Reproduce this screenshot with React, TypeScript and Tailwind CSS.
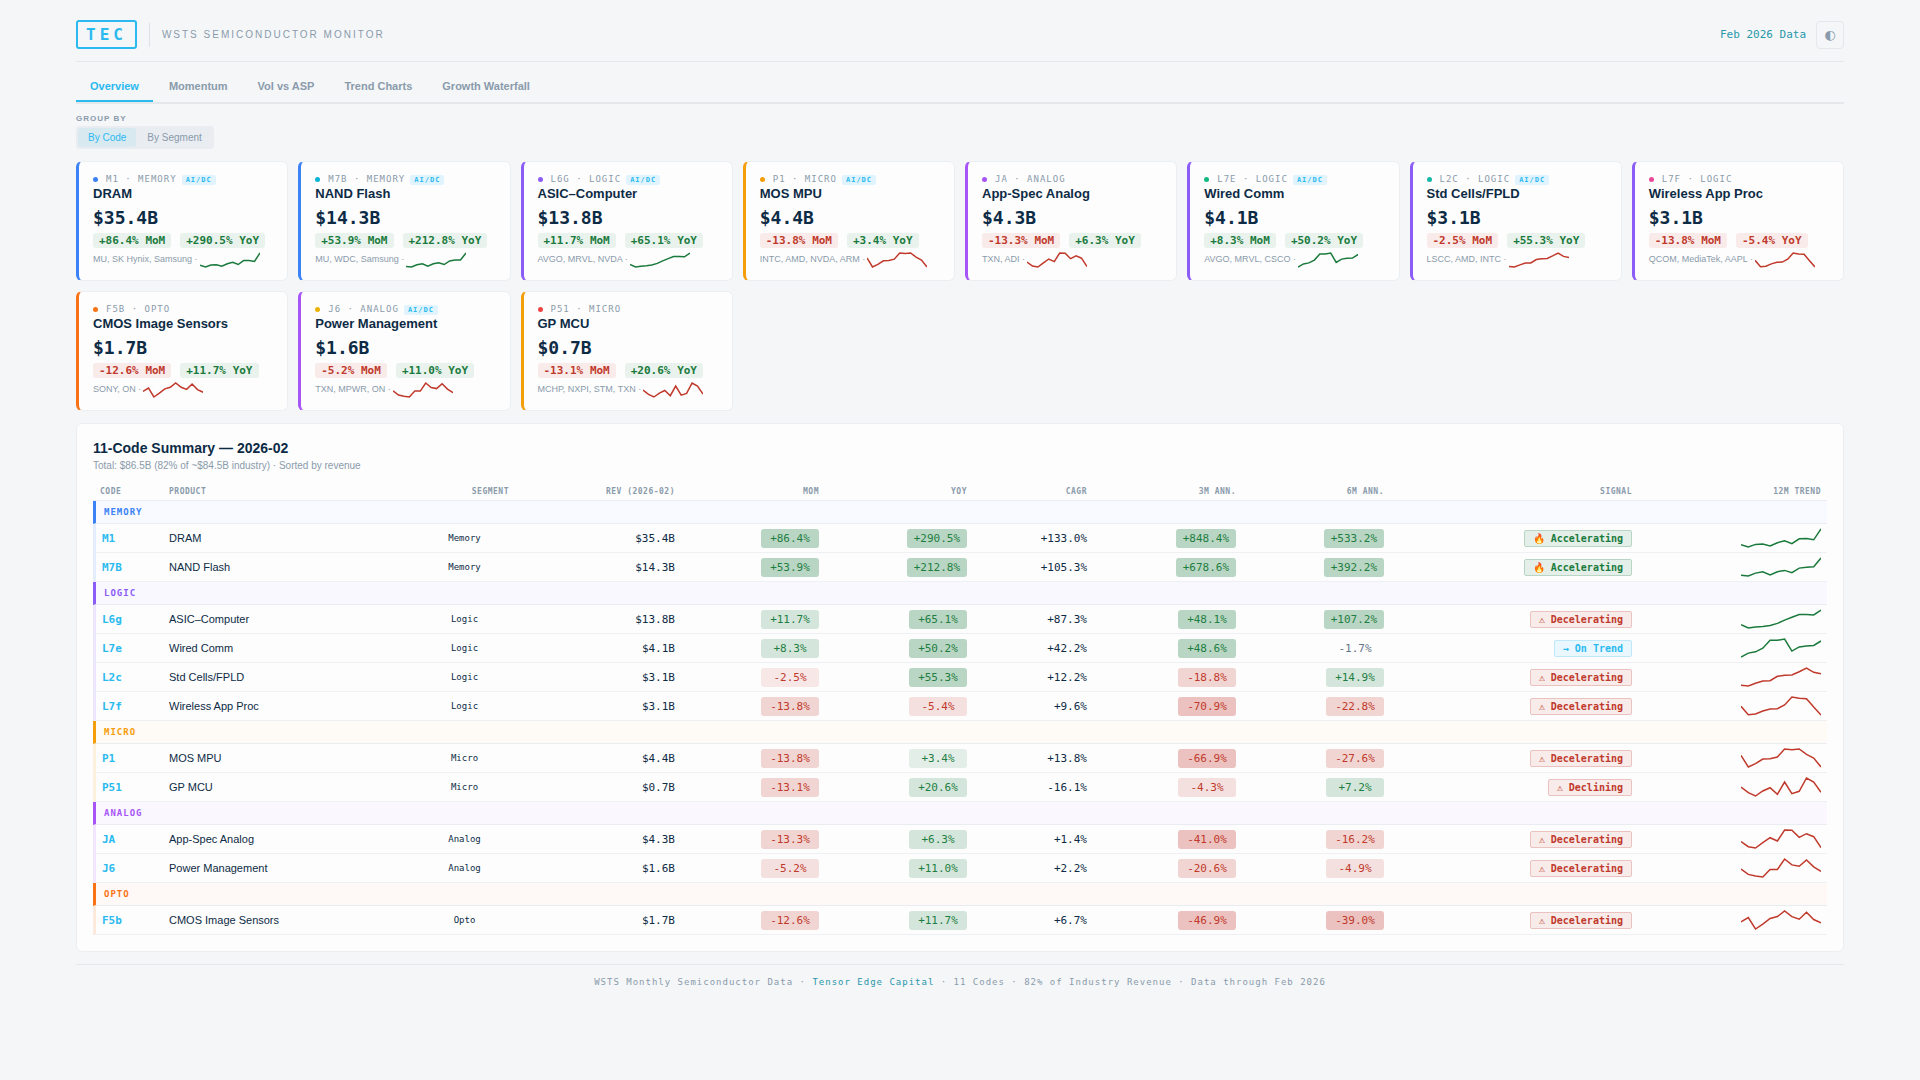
import clsx from "clsx";
import { useState } from "react";

type Segment = "Memory" | "Logic" | "Micro" | "Analog" | "Opto";
type Signal = "Accelerating" | "Decelerating" | "On Trend" | "Declining";

type Code = {
  code: string;
  name: string;
  segment: Segment;
  dot: string;
  ai?: boolean;
  rev: string;
  mom: number;
  yoy: number;
  cagr: number;
  m3: number;
  m6: number;
  tickers: string;
  signal: Signal;
  up?: boolean;
  trend: number[];
};

const codes: Code[] = [
  { code: "M1", name: "DRAM", segment: "Memory", dot: "bg-[#3b82f6]", ai: true, rev: "$35.4B", mom: 86.4, yoy: 290.5, cagr: 133.0, m3: 848.4, m6: 533.2, tickers: "MU, SK Hynix, Samsung", signal: "Accelerating", up: true, trend: [7, 0, 8, 9, 3, 13, 19, 10, 25, 26, 22, 55] },
  { code: "M7B", name: "NAND Flash", segment: "Memory", dot: "bg-[#06b6d4]", ai: true, rev: "$14.3B", mom: 53.9, yoy: 212.8, cagr: 105.3, m3: 678.6, m6: 392.2, tickers: "MU, WDC, Samsung", signal: "Accelerating", up: true, trend: [2, 0, 9, 13, 3, 13, 17, 10, 24, 27, 28, 55] },
  { code: "L6g", name: "ASIC–Computer", segment: "Logic", dot: "bg-[#8b5cf6]", ai: true, rev: "$13.8B", mom: 11.7, yoy: 65.1, cagr: 87.3, m3: 48.1, m6: 107.2, tickers: "AVGO, MRVL, NVDA", signal: "Decelerating", up: true, trend: [10, 0, 3, 5, 8, 14, 24, 33, 41, 41, 40, 55] },
  { code: "P1", name: "MOS MPU", segment: "Micro", dot: "bg-[#f59e0b]", ai: true, rev: "$4.4B", mom: -13.8, yoy: 3.4, cagr: 13.8, m3: -66.9, m6: -27.6, tickers: "INTC, AMD, NVDA, ARM", signal: "Decelerating", trend: [35, 0, 10, 24, 25, 30, 54, 52, 54, 38, 27, 0] },
  { code: "JA", name: "App-Spec Analog", segment: "Analog", dot: "bg-[#a855f7]", rev: "$4.3B", mom: -13.3, yoy: 6.3, cagr: 1.4, m3: -41.0, m6: -16.2, tickers: "TXN, ADI", signal: "Decelerating", trend: [19, 4, 0, 16, 31, 21, 54, 53, 32, 43, 34, 1] },
  { code: "L7e", name: "Wired Comm", segment: "Logic", dot: "bg-[#10b981]", ai: true, rev: "$4.1B", mom: 8.3, yoy: 50.2, cagr: 42.2, m3: 48.6, m6: -1.7, tickers: "AVGO, MRVL, CSCO", signal: "On Trend", up: true, trend: [0, 12, 16, 27, 51, 51, 55, 18, 31, 34, 35, 49] },
  { code: "L2c", name: "Std Cells/FPLD", segment: "Logic", dot: "bg-[#14b8a6]", ai: true, rev: "$3.1B", mom: -2.5, yoy: 55.3, cagr: 12.2, m3: -18.8, m6: 14.9, tickers: "LSCC, AMD, INTC", signal: "Decelerating", trend: [2, 0, 8, 15, 16, 29, 32, 33, 43, 54, 41, 37] },
  { code: "L7f", name: "Wireless App Proc", segment: "Logic", dot: "bg-[#ec4899]", rev: "$3.1B", mom: -13.8, yoy: -5.4, cagr: 9.6, m3: -70.9, m6: -22.8, tickers: "QCOM, MediaTek, AAPL", signal: "Decelerating", trend: [26, 1, 3, 12, 18, 19, 30, 54, 50, 49, 24, 0] },
  { code: "F5b", name: "CMOS Image Sensors", segment: "Opto", dot: "bg-[#f97316]", rev: "$1.7B", mom: -12.6, yoy: 11.7, cagr: 6.7, m3: -46.9, m6: -39.0, tickers: "SONY, ON", signal: "Decelerating", trend: [22, 35, 0, 15, 32, 38, 55, 38, 30, 51, 29, 19] },
  { code: "J6", name: "Power Management", segment: "Analog", dot: "bg-[#eab308]", ai: true, rev: "$1.6B", mom: -5.2, yoy: 11.0, cagr: 2.2, m3: -20.6, m6: -4.9, tickers: "TXN, MPWR, ON", signal: "Decelerating", trend: [24, 8, 3, 0, 23, 23, 55, 37, 33, 52, 31, 17] },
  { code: "P51", name: "GP MCU", segment: "Micro", dot: "bg-[#ef4444]", rev: "$0.7B", mom: -13.1, yoy: 20.6, cagr: -16.1, m3: -4.3, m6: 7.2, tickers: "MCHP, NXPI, STM, TXN", signal: "Declining", trend: [27, 10, 0, 15, 25, 5, 42, 7, 14, 54, 42, 11] },
];

const segments: { name: Segment; card: string; head: string; row: string }[] = [
  { name: "Memory", card: "border-l-[#3b82f6]", head: "border-l-[#3b82f6] text-[#3b82f6] bg-[#f8faff]", row: "border-l-[#e3edfe]" },
  { name: "Logic", card: "border-l-[#8b5cf6]", head: "border-l-[#8b5cf6] text-[#8b5cf6] bg-[#f9f8fe]", row: "border-l-[#ede7fe]" },
  { name: "Micro", card: "border-l-[#f59e0b]", head: "border-l-[#f59e0b] text-[#f59e0b] bg-[#fefaf5]", row: "border-l-[#fdf0dc]" },
  { name: "Analog", card: "border-l-[#a855f7]", head: "border-l-[#a855f7] text-[#a855f7] bg-[#faf8fe]", row: "border-l-[#f2e6fe]" },
  { name: "Opto", card: "border-l-[#f97316]", head: "border-l-[#f97316] text-[#f97316] bg-[#fef9f6]", row: "border-l-[#fee9dd]" },
];

const tabs = ["Overview", "Momentum", "Vol vs ASP", "Trend Charts", "Growth Waterfall"];

const columns = [
  { label: "Code", width: "w-[70px]" },
  { label: "Product", width: "w-[251px]" },
  { label: "Segment", width: "w-[101px]" },
  { label: "Rev (2026-02)", width: "w-[166px]" },
  { label: "MoM", width: "w-[144px]" },
  { label: "YoY", width: "w-[148px]" },
  { label: "CAGR", width: "w-[120px]" },
  { label: "3M Ann.", width: "w-[149px]" },
  { label: "6M Ann.", width: "w-[148px]" },
  { label: "Signal", width: "w-[248px]" },
  { label: "12M Trend", width: "w-[189px]" },
];

const mono = "font-['DejaVu_Sans_Mono',monospace]";

const pct = (v: number) => `${v >= 0 ? "+" : ""}${v.toFixed(1)}%`;

function heat(v: number) {
  if (v >= 25) return "bg-[#b9d6c4] text-[#1e7e42]";
  if (v >= 5) return "bg-[#d4e6db] text-[#1e7e42]";
  if (v >= 2) return "bg-[#e3eee8] text-[#1e7e42]";
  if (v > -2) return "text-[#64748b]";
  if (v > -4) return "bg-[#f7e7e6] text-[#c0392b]";
  if (v > -10) return "bg-[#f4e0df] text-[#c0392b]";
  if (v > -30) return "bg-[#f1d5d2] text-[#c0392b]";
  return "bg-[#ebc2bf] text-[#c0392b]";
}

function Sparkline({ data, up, width, height }: { data: number[]; up?: boolean; width: number; height: number }) {
  const min = Math.min(...data);
  const range = Math.max(...data) - min;
  const points = data
    .map((v, i) => {
      const x = (i / (data.length - 1)) * width;
      const y = height - 2 - ((v - min) / range) * (height - 4);
      return `${x.toFixed(1)},${y.toFixed(1)}`;
    })
    .join(" ");
  return (
    <svg width={width} height={height} viewBox={`0 0 ${width} ${height}`} className="inline-block shrink-0 align-middle" aria-hidden="true">
      <polyline points={points} fill="none" stroke={up ? "#1a7a3c" : "#c0392b"} strokeWidth="1.5" />
    </svg>
  );
}

function Delta({ value, label }: { value: number; label: string }) {
  return (
    <span className={clsx("rounded-[3px] px-1.5 py-px", value >= 0 ? "bg-[#e9f2ed] text-[#1a7a3c]" : "bg-[#f8ebea] text-[#c0392b]")}>
      {pct(value)} {label}
    </span>
  );
}

function CodeCard({ item }: { item: Code }) {
  const segment = segments.find((s) => s.name === item.segment);
  return (
    <article className={clsx("rounded-md border border-l-[3px] border-[#eceff2] bg-[#fdfdfd] pt-3 pr-3 pb-[11px] pl-3.5", segment?.card)}>
      <div className={clsx(mono, "flex items-center text-[9px] leading-[11px] tracking-[1px] whitespace-nowrap text-[#8a9bab] uppercase")}>
        <span className={clsx("mr-2 size-[5px] rounded-full", item.dot)} />
        {item.code} · {item.segment}
        {item.ai && <span className="ml-[5px] rounded-[2px] bg-[#e1f4fd] px-1 py-px text-[7px] leading-[8px] font-bold text-[#2bbaf0]">AI/DC</span>}
      </div>
      <h2 className="mt-px text-[13px] leading-[15px] font-bold whitespace-nowrap">{item.name}</h2>
      <p className={clsx(mono, "mt-1.5 text-[18px] leading-[21px] font-bold")}>{item.rev}</p>
      <p className={clsx(mono, "mt-[5px] flex gap-[9px] text-[11px] leading-[13px] font-bold whitespace-nowrap")}>
        <Delta value={item.mom} label="MoM" />
        <Delta value={item.yoy} label="YoY" />
      </p>
      <div className="mt-[3px] flex gap-0.5 text-[9px] leading-4 whitespace-nowrap text-[#8a9bab]">
        <span>{item.tickers} ·</span>
        <Sparkline data={item.trend} up={item.up} width={60} height={18} />
      </div>
    </article>
  );
}

function SignalBadge({ signal }: { signal: Signal }) {
  const icon = signal === "Accelerating" ? "🔥" : signal === "On Trend" ? "→" : "⚠";
  return (
    <span
      className={clsx(
        "inline-block rounded-[2px] border px-2 py-px align-middle text-[10px] leading-[13px] font-bold",
        signal === "Accelerating" && "border-[#b9d6c4] bg-[#e4efe9] text-[#1a7a3c]",
        signal === "On Trend" && "border-[#bfe8fb] bg-[#eaf7fe] text-[#2bbaf0]",
        (signal === "Decelerating" || signal === "Declining") && "border-[#ebc2bf] bg-[#f8eceb] text-[#c0392b]",
      )}
    >
      {icon} {signal}
    </span>
  );
}

function HeatCell({ value }: { value: number }) {
  return (
    <td className="px-1.5 text-right">
      <span className={clsx("inline-block min-w-[58px] rounded-[3px] px-[7px] py-[3px] text-center align-middle leading-[13px]", heat(value))}>{pct(value)}</span>
    </td>
  );
}

function SummaryTable() {
  return (
    <table className={clsx(mono, "mt-[11px] w-full table-fixed border-separate border-spacing-0 text-[11px]")}>
      <thead>
        <tr className="h-[18px]">
          {columns.map((c, i) => (
            <th
              key={c.label}
              scope="col"
              className={clsx(
                c.width,
                "border-b border-[#e9ecf0] pt-px text-[8px] leading-[10px] font-bold tracking-[0.5px] whitespace-nowrap text-[#8a9bab] uppercase",
                i === 0 ? "px-[7px]" : "px-1.5",
                i < 2 ? "text-left" : "text-right",
              )}
            >
              {c.label}
            </th>
          ))}
        </tr>
      </thead>
      {segments.map((s) => (
        <tbody key={s.name}>
          <tr className="h-[23px]">
            <th scope="colgroup" colSpan={11} className={clsx("border-b border-l-[3px] border-b-[#e9ecf1] px-2 text-left text-[9px] leading-[11px] font-bold tracking-[1px] uppercase", s.head)}>
              {s.name}
            </th>
          </tr>
          {codes
            .filter((c) => c.segment === s.name)
            .sort((a, b) => Number(b.rev.slice(1, -1)) - Number(a.rev.slice(1, -1)))
            .map((c) => (
              <tr key={c.code} className="h-[29px] [&>td]:border-b [&>td]:border-b-[#eef0f3]">
                <td className={clsx("border-l-[3px] px-1.5 pt-0.5 font-bold text-[#2bbaf0]", s.row)}>{c.code}</td>
                <td className="px-1.5 font-['Liberation_Sans',Arial,sans-serif] whitespace-nowrap">{c.name}</td>
                <td className="px-1.5 pt-0.5 text-center text-[9px]">{c.segment}</td>
                <td className="px-1.5 pt-0.5 text-right">{c.rev}</td>
                <HeatCell value={c.mom} />
                <HeatCell value={c.yoy} />
                <td className="px-1.5 pt-0.5 text-right">{pct(c.cagr)}</td>
                <HeatCell value={c.m3} />
                <HeatCell value={c.m6} />
                <td className="px-1.5 text-right whitespace-nowrap">
                  <SignalBadge signal={c.signal} />
                </td>
                <td className="px-1.5 text-right">
                  <Sparkline data={c.trend} up={c.up} width={80} height={22} />
                </td>
              </tr>
            ))}
        </tbody>
      ))}
    </table>
  );
}

export default function App() {
  const [tab, setTab] = useState("Overview");
  const [groupBy, setGroupBy] = useState("By Code");

  return (
    <div className="min-h-screen bg-[#f4f6f8] font-['Liberation_Sans',Arial,sans-serif] text-[#0d2b45]">
      <div className="mx-auto max-w-[1800px] px-4 pt-5 pb-5">
        <header className="flex items-center justify-between border-b border-[#e5e8eb] pb-3">
          <div className="flex items-center gap-3">
            <span className={clsx(mono, "rounded-[3px] border-2 border-[#2bbaf0] px-2 py-[3px] text-[16px] leading-[19px] font-bold tracking-[4px] text-[#2bbaf0]")}>TEC</span>
            <span className="h-6 w-px bg-[#dde1e5]" />
            <h1 className="text-[10px] tracking-[2px] text-[#8a9bab] uppercase">WSTS Semiconductor Monitor</h1>
          </div>
          <div className="flex items-center gap-2.5">
            <span className={clsx(mono, "pt-0.5 text-[11px] text-[#2896aa]")}>Feb 2026 Data</span>
            <button type="button" aria-label="Toggle theme" className="flex size-7 items-center justify-center rounded-[4px] border border-[#e5e8eb] font-['DejaVu_Sans',sans-serif] text-[13px] leading-none text-[#8a9bab]">
              ◐
            </button>
          </div>
        </header>

        <nav className="mt-[5px] flex gap-0.5 border-b-2 border-[#e5e8eb]">
          {tabs.map((t) => (
            <button
              key={t}
              type="button"
              onClick={() => setTab(t)}
              className={clsx("border-b-2 px-3.5 pt-[13px] pb-[7px] text-[11px] leading-[13px] font-bold", t === tab ? "border-[#2bbaf0] text-[#2bbaf0]" : "border-transparent text-[#8a9bab]")}
            >
              {t}
            </button>
          ))}
        </nav>

        <main>
          <p id="group-label" className="mt-2.5 text-[8px] leading-[10px] font-bold tracking-[1px] text-[#8a9bab] uppercase">
            Group by
          </p>
          <div role="group" aria-labelledby="group-label" className="mt-0.5 inline-flex gap-px rounded-[4px] bg-[#e9ecf1] p-0.5 align-top">
            {["By Code", "By Segment"].map((g) => (
              <button
                key={g}
                type="button"
                aria-pressed={g === groupBy}
                onClick={() => setGroupBy(g)}
                className={clsx("rounded-[3px] px-2.5 py-1 text-[10px] leading-[11px]", g === groupBy ? "bg-[#d9e9f0] text-[#2bbaf0]" : "text-[#8a9bab]")}
              >
                {g}
              </button>
            ))}
          </div>

          <section className="mt-3 grid grid-cols-[repeat(auto-fill,minmax(200px,1fr))] gap-2.5">
            {codes.map((c) => (
              <CodeCard key={c.code} item={c} />
            ))}
          </section>

          <section className="mt-3 rounded-md border border-[#eceff2] bg-[#fdfdfd] p-4">
            <h2 className="text-[14px] leading-4 font-bold">11-Code Summary — 2026-02</h2>
            <p className="mt-[3px] text-[10px] leading-[13px] text-[#8a9bab]">Total: $86.5B (82% of ~$84.5B industry) · Sorted by revenue</p>
            <SummaryTable />
          </section>
        </main>

        <footer className={clsx(mono, "mt-3 border-t border-[#e5e8eb] pt-3 text-center text-[9px] leading-[11px] tracking-[1px] text-[#8a9bab]")}>
          WSTS Monthly Semiconductor Data · <span className="text-[#2896aa]">Tensor Edge Capital</span> · 11 Codes · 82% of Industry Revenue · Data through Feb 2026
        </footer>
      </div>
    </div>
  );
}
